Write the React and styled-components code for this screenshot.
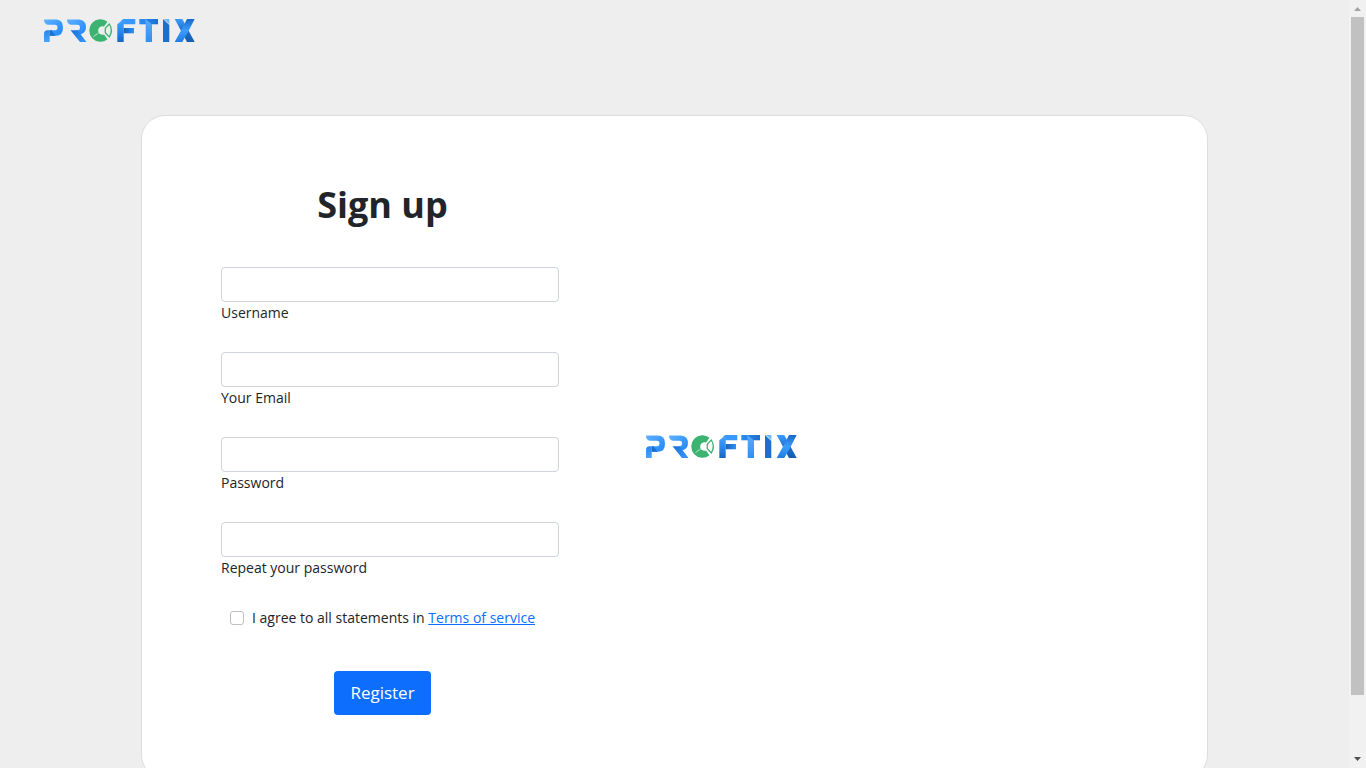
import React, { useId } from "react";
import styled, { createGlobalStyle } from "styled-components";

const GlobalStyle = createGlobalStyle`
  *, *::before, *::after { box-sizing: border-box; }
  body {
    margin: 0;
    background: #eeeeee;
    color: #212529;
    font-family: "Segoe UI", "Open Sans", "Noto Sans", sans-serif;
    font-size: 14px;
    line-height: 22px;
  }
`;

const Viewport = styled.div`
  display: flex;
  height: 100vh;
`;

const Page = styled.div`
  flex: 1;
  min-width: 0;
  overflow-y: auto;
  scrollbar-width: none;
`;

const Header = styled.header`
  padding: 18px 43px;
`;

const HomeLink = styled.a`
  display: inline-block;
  vertical-align: top;
`;

const LogoSvg = styled.svg`
  display: block;
  width: 153px;
  height: 26px;
`;

const Main = styled.main`
  padding: 53px 24px 43px;
`;

const Card = styled.section`
  display: grid;
  grid-template-columns: minmax(0, 353px) minmax(0, 1fr);
  column-gap: 86px;
  align-items: center;
  max-width: 1067px;
  margin: 0 auto;
  padding: 43px 64px;
  background: #ffffff;
  border: 1px solid #dddddd;
  border-radius: 24px;
`;

const Form = styled.form`
  display: flex;
  flex-direction: column;
  align-items: center;
  padding: 24px 0 20px;
`;

const Title = styled.h1`
  margin: 0 0 41px;
  font-size: 36px;
  line-height: 43px;
  font-weight: 700;
`;

const FieldBox = styled.div`
  display: flex;
  flex-direction: column;
  width: 100%;
  padding-left: 15px;
  margin-bottom: 28px;
`;

const TextInput = styled.input`
  width: 100%;
  height: 35px;
  padding: 5px 11px;
  font: inherit;
  color: inherit;
  background: #ffffff;
  border: 1px solid #ced4da;
  border-radius: 4px;
`;

const AgreeRow = styled.div`
  display: flex;
  align-items: center;
  gap: 8px;
  margin-bottom: 42px;
  white-space: nowrap;
`;

const Checkbox = styled.input`
  appearance: none;
  width: 14px;
  height: 14px;
  margin: 0;
  background: #ffffff;
  border: 1px solid #bfbfbf;
  border-radius: 3px;

  &:checked { background: #0d6efd; }
`;

const TermsLink = styled.a`
  color: #0d6efd;
  text-decoration: underline;
`;

const SubmitButton = styled.button`
  height: 44px;
  padding: 0 16px;
  font: inherit;
  font-size: 17px;
  color: #ffffff;
  background: #0d6efd;
  border: 0;
  border-radius: 4px;
  cursor: pointer;
`;

const ScrollRail = styled.div`
  display: flex;
  flex-direction: column;
  align-items: center;
  flex: 0 0 17px;
  background: #f1f1f1;
`;

const ScrollArrow = styled.svg`
  flex: 0 0 17px;
  width: 17px;
`;

const ScrollTrack = styled.div`
  flex: 1;
  width: 13px;
`;

const ScrollThumb = styled.div`
  height: 92.4%;
  background: #c1c1c1;
`;

function Logo() {
  const id = useId();
  const fill = (name) => `url(#${id}-${name})`;
  const gradient = (name, x2, y2, ...colors) => (
    <linearGradient id={`${id}-${name}`} x1="0" y1="0" x2={x2} y2={y2}>
      {colors.map((color, i) => (
        <stop key={i} offset={i / (colors.length - 1)} stopColor={color} />
      ))}
    </linearGradient>
  );
  return (
    <LogoSvg viewBox="0 0 153 26" role="img" aria-label="Proftix">
      <defs>
        {gradient("bowl", 1, 1, "#62b2ff", "#3c9bff", "#1f86fb")}
        {gradient("foot", 0, 1, "#2a85ea", "#48a4ff")}
        {gradient("leg", 1, 1, "#1b72d6", "#3397ff")}
        {gradient("stem", 0, 1, "#4ba6ff", "#2a8af0", "#1765c0")}
        {gradient("arm", 1, 0, "#1762b8", "#2f90f5")}
        {gradient("bar", 1, 0, "#2e8df2", "#1b6fcd")}
        {gradient("post", 0, 1, "#57adff", "#2f8ff5")}
        {gradient("slash", 0, 1, "#1a69c4", "#3d9dff", "#1f7be0")}
        {gradient("back", 0, 1, "#3c9cff", "#1c70cf", "#155cae")}
      </defs>

      <path fill={fill("bowl")} d="M1 1.500H13.500Q20 2 20 9.500Q20 17.700 13 17.700H6.700V12.300H12Q14.500 12.300 14.500 9.500Q14.500 6.800 12 6.800H5Q1 6 1 1.500Z" />
      <path fill={fill("foot")} d="M1 16Q1 12.300 4.500 12.300H6.700V24H1Z" />
      <path fill="#1a6fd0" d="M6.700 12.300H8.500L12.500 17.700H6.700Z" />

      <path fill={fill("bowl")} d="M24 1.500H36Q43 2 43 9Q43 14.500 37.500 16.500L33 12.300H34.500Q37 12.300 37 9.500Q37 6.800 34.500 6.800H28Q24 6 24 1.500Z" />
      <path fill={fill("leg")} d="M27.500 12.300H34.500L43.500 24H37Z" />

      <path fill="#3cb371" d="M64.500 3.800A11.200 11.200 0 1 0 64.500 21.200L61 16.500A4.300 4.300 0 1 1 61 8.500Z" />
      <path fill="none" stroke="#d5eee0" strokeWidth=".8" d="M50.500 18.500L55.500 15" />
      <path fill="none" stroke="#3cb371" strokeWidth="1.300" d="M66.300 6Q70.500 12.500 66.300 19L62.300 14.800V10.200Z" />

      <path fill="#3998fb" d="M80 1H92.300V6.300H78V3Z" />
      <path fill={fill("stem")} d="M74.300 6.300L80.700 1V24H74.300Z" />
      <path fill={fill("arm")} d="M80.700 10H91V15.300H80.700Z" />

      <path fill={fill("bar")} d="M96.300 1H115V6.300H96.300Z" />
      <path fill={fill("post")} d="M102 1L109 6.300V24H102.700V6.300Z" />

      <path fill="#1c70cd" d="M120 1L126.300 7V24H120Z" />
      <path fill="#6bb8ff" d="M121 1H126.300V6.300Z" />

      <path fill={fill("back")} d="M131.700 1H139.300L151.700 24H144Z" />
      <path fill={fill("slash")} d="M144 1H151.700L145.800 12.500L139.300 24H131.700L138 12.500Z" />
    </LogoSvg>
  );
}

function Field({ id, label, type = "text" }) {
  return (
    <FieldBox>
      <TextInput id={id} name={id} type={type} />
      <label htmlFor={id}>{label}</label>
    </FieldBox>
  );
}

export default function App() {
  return (
    <>
      <GlobalStyle />
      <Viewport>
        <Page>
          <Header>
            <HomeLink href="#home">
              <Logo />
            </HomeLink>
          </Header>
          <Main>
            <Card>
              <Form onSubmit={(event) => event.preventDefault()}>
                <Title>Sign up</Title>
                <Field id="username" label="Username" />
                <Field id="email" label="Your Email" type="email" />
                <Field id="password" label="Password" type="password" />
                <Field id="repeat" label="Repeat your password" type="password" />
                <AgreeRow>
                  <Checkbox id="agree" type="checkbox" />
                  <label htmlFor="agree">
                    I agree to all statements in <TermsLink href="#terms">Terms of service</TermsLink>
                  </label>
                </AgreeRow>
                <SubmitButton type="submit">Register</SubmitButton>
              </Form>
              <Logo />
            </Card>
          </Main>
        </Page>
        <ScrollRail aria-hidden="true">
          <ScrollArrow viewBox="0 0 17 17">
            <path fill="#a3a3a3" d="M5 11L8.500 7L12 11Z" />
          </ScrollArrow>
          <ScrollTrack>
            <ScrollThumb />
          </ScrollTrack>
          <ScrollArrow viewBox="0 0 17 17">
            <path fill="#505050" d="M5 6L8.500 10L12 6Z" />
          </ScrollArrow>
        </ScrollRail>
      </Viewport>
    </>
  );
}
